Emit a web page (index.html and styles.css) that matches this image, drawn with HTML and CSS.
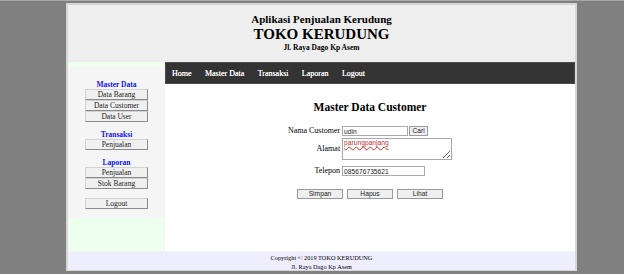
FILE: index.html
```html
<!DOCTYPE html>
<html lang="id">
<head>
  <meta charset="UTF-8">
  <title>TOKO KERUDUNG</title>
  <link rel="stylesheet" href="styles.css">
</head>
<body>
  <div class="wrap">

    <!-- Judul aplikasi -->
    <div class="header">
      <div class="judul">Aplikasi Penjualan Kerudung</div>
      <div class="toko">TOKO KERUDUNG</div>
      <div class="alamat">Jl. Raya Dago Kp Asem</div>
    </div>

    <div class="tengah">
      <!-- Menu samping -->
      <div class="samping">
        <div class="samping-atas"></div>
        <div class="samping-menu">
          <div class="grup">Master Data</div>
          <button class="tombol">Data Barang</button>
          <button class="tombol">Data Customer</button>
          <button class="tombol">Data User</button>

          <div class="grup spasi">Transaksi</div>
          <button class="tombol">Penjualan</button>

          <div class="grup spasi">Laporan</div>
          <button class="tombol">Penjualan</button>
          <button class="tombol">Stok Barang</button>

          <button class="tombol logout">Logout</button>
        </div>
        <div class="samping-bawah"></div>
      </div>

      <!-- Isi halaman -->
      <div class="isi">
        <div class="menu">
          <a href="#">Home</a>
          <a href="#">Master Data</a>
          <a href="#">Transaksi</a>
          <a href="#">Laporan</a>
          <a href="#">Logout</a>
        </div>

        <div class="konten">
          <h2>Master Data Customer</h2>

          <div class="form">
            <label>Nama Customer</label>
            <div class="baris">
              <input type="text" class="input-nama" value="udin">
              <button class="btn-cari">Cari</button>
            </div>

            <label class="label-alamat">Alamat</label>
            <div class="baris alamat-baris">
              <textarea class="input-alamat" spellcheck="false">parungpanjang</textarea>
            </div>

            <label class="label-telp">Telepon</label>
            <div class="baris telp">
              <input type="text" class="input-telp" value="085676735621">
            </div>
          </div>

          <div class="aksi">
            <button class="btn-aksi">Simpan</button>
            <button class="btn-aksi">Hapus</button>
            <button class="btn-aksi">Lihat</button>
          </div>
        </div>
      </div>
    </div>

    <!-- Footer -->
    <div class="footer">
      Copyright &copy; 2019 TOKO KERUDUNG<br>
      Jl. Raya Dago Kp Asem
    </div>
  </div>
</body>
</html>
```

FILE: styles.css
```css
/* Umum */
html, body {
  margin: 0;
  padding: 0;
}

body {
  background-color: #808080;
  border-top: 1px solid #a8a8a8;
  padding-top: 2px;
  font-family: "Liberation Serif", "Times New Roman", serif;
  color: #000;
}

.wrap {
  width: 507px;
  margin-left: 66px;
  border: 2px solid #d6d6d6;
  border-bottom-width: 1px;
  background-color: #eee;
}

/* Header */
.header {
  height: 57px;
  background-color: #eee;
  text-align: center;
  font-weight: bold;
  padding-top: 8px;
  box-sizing: border-box;
}

.judul {
  font-size: 11px;
  line-height: 13px;
}

.toko {
  font-size: 15px;
  line-height: 17px;
}

.alamat {
  font-size: 7.5px;
  line-height: 10px;
}

/* Bagian tengah */
.tengah {
  display: flex;
  height: 189px;
}

.samping {
  width: 97px;
  display: flex;
  flex-direction: column;
}

.samping-atas {
  height: 5px;
  background-color: #efffef;
}

.samping-menu {
  height: 151px;
  background-color: #f5f5f5;
  padding-top: 13px;
  box-sizing: border-box;
  text-align: center;
}

.samping-bawah {
  flex: 1;
  background-color: #efffef;
  border-right: 1px solid #f4f4f4;
}

.grup {
  color: #1010ff;
  font-weight: bold;
  font-size: 7.5px;
  line-height: 9px;
}

.grup.spasi {
  margin-top: 8px;
}

.tombol {
  display: block;
  width: 63px;
  height: 11px;
  margin: 0 auto;
  padding: 0;
  box-sizing: border-box;
  font-family: "Liberation Serif", "Times New Roman", serif;
  font-size: 7.5px;
  line-height: 9px;
  color: #222;
  background-color: #f0f0f0;
  border: 1px solid;
  border-color: #d2d2d2 #8a8a8a #8a8a8a #d2d2d2;
}

.tombol.logout {
  margin-top: 9px;
}

/* Isi */
.isi {
  flex: 1;
  display: flex;
  flex-direction: column;
  background-color: #fff;
}

.menu {
  height: 22px;
  background-color: #333;
  border: 1px solid #4a4a4a;
  box-sizing: border-box;
  display: flex;
  align-items: center;
}

.menu a {
  color: #fff;
  text-decoration: none;
  font-size: 8px;
  padding: 0 6.7px;
  text-shadow: 0 0 0.4px #fff;
}

.menu a:first-child {
  padding-left: 6px;
}

.konten {
  flex: 1;
  background-color: #fff;
}

.konten h2 {
  margin: 16px 0 0 0;
  font-size: 11.5px;
  line-height: 14px;
  text-align: center;
}

/* Form customer */
.form {
  display: grid;
  grid-template-columns: auto auto;
  justify-content: center;
  column-gap: 2px;
  margin-top: 12px;
  font-size: 8px;
}

.form label {
  text-align: right;
  line-height: 10px;
}

.label-alamat {
  margin-top: 2px;
  align-self: center;
}

.alamat-baris {
  margin-top: 2px;
}

.label-telp,
.baris.telp {
  margin-top: 6px;
}

.baris {
  display: flex;
  gap: 1px;
}

.form input,
.form textarea,
.form button {
  font-family: "Liberation Sans", Arial, sans-serif;
  font-size: 6.7px;
  box-sizing: border-box;
  margin: 0;
}

.form input {
  height: 10px;
  padding: 0 1px;
  border: 1px solid #a9a9a9;
  color: #222;
}

.input-nama {
  width: 66px;
}

.input-telp {
  width: 83px;
}

.input-alamat {
  width: 110px;
  height: 22px;
  padding: 0 1px;
  border: 1px solid #a9a9a9;
  color: #c03030;
  line-height: 8px;
  text-decoration: underline wavy #e03030;
  text-decoration-thickness: 1px;
}

.btn-cari {
  width: 19px;
  height: 10px;
  padding: 0;
  line-height: 8px;
  background-color: #efefef;
  border: 1px solid #9a9a9a;
  color: #222;
}

.aksi {
  display: flex;
  justify-content: center;
  gap: 4px;
  margin-top: 13px;
}

.btn-aksi {
  width: 46px;
  height: 10px;
  padding: 0;
  box-sizing: border-box;
  font-family: "Liberation Sans", Arial, sans-serif;
  font-size: 6.7px;
  line-height: 8px;
  color: #222;
  background-color: #efefef;
  border: 1px solid #9a9a9a;
}

/* Footer */
.footer {
  height: 19px;
  box-sizing: border-box;
  padding-top: 2px;
  background-color: #eeeeff;
  border-top: 1px solid #f4f4f4;
  text-align: center;
  font-size: 6.3px;
  line-height: 8.7px;
}
```
